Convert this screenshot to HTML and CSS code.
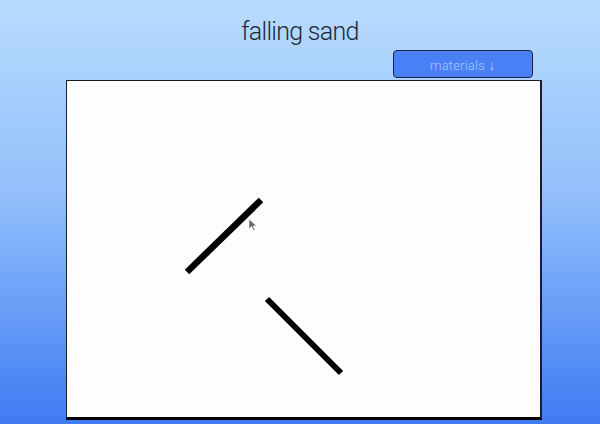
FILE: index.html
```html
<!DOCTYPE html>
<html>
<head>
<meta charset="utf-8">
<link rel="stylesheet" href="styles.css">
</head>
<body>
<div class="page">
  <h1 class="title">falling sand</h1>
  <div class="toolbar">
    <button class="materials">materials <span class="arrow">↓</span></button>
  </div>
  <div class="canvas">
    <svg class="scene" width="473" height="336" viewBox="0 0 473 336">
      <line x1="120" y1="191" x2="194" y2="119" stroke="#000" stroke-width="6.5"/>
      <line x1="200" y1="218" x2="274" y2="292" stroke="#000" stroke-width="6"/>
      <path d="M182 138 L182 148 L184.5 145.5 L186.5 149.5 L188 148.8 L186 145 L189.5 145 Z" fill="#666" stroke="#fff" stroke-width="0.6"/>
    </svg>
  </div>
</div>
</body>
</html>
```
FILE: styles.css
```css
html, body {
  margin: 0;
  padding: 0;
}
body {
  width: 600px;
  height: 424px;
  overflow: hidden;
  background: linear-gradient(to bottom, #b8dcfd 0%, #93c0fb 45%, #3f7bf3 100%);
  font-family: Roboto, "Liberation Sans", sans-serif;
}
.page {
  display: flex;
  flex-direction: column;
  height: 424px;
}
.title {
  margin: 16px 0 0 0;
  height: 32px;
  line-height: 32px;
  text-align: center;
  font-weight: 300;
  font-size: 25px;
  letter-spacing: -0.7px;
  color: #1d2a3f;
}
.toolbar {
  display: flex;
  justify-content: flex-end;
  padding-right: 67px;
  margin-top: 2px;
}
.materials {
  width: 140px;
  height: 28px;
  border: 1px solid #1b2442;
  border-radius: 4px;
  background: #4a80f6;
  color: #a8c7ff;
  font-family: Roboto, "Liberation Sans", sans-serif;
  font-weight: 300;
  font-size: 13px;
  letter-spacing: 0.2px;
  padding: 0;
}
.arrow {
  font-family: "Liberation Sans", sans-serif;
  font-size: 15px;
  font-weight: 400;
}
.canvas {
  margin: 2px 0 0 66px;
  width: 473px;
  height: 336px;
  background: #fdfcff;
  border: 1px solid #1a1d2a;
  border-right-width: 2px;
  border-bottom: 3px solid #000;
}
.scene {
  display: block;
}
```
